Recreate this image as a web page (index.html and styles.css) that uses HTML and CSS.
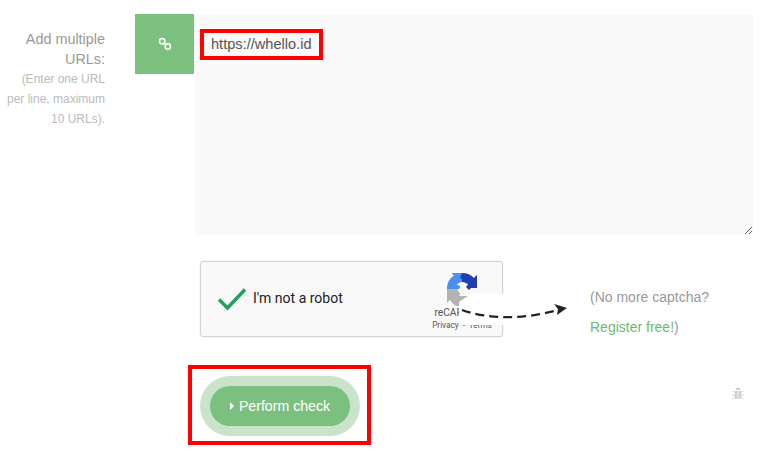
FILE: index.html
```html
<!DOCTYPE html>
<html lang="en">
<head>
<meta charset="utf-8">
<title>Add multiple URLs</title>
<link rel="stylesheet" href="styles.css">
</head>
<body>
<main class="form">
  <section class="url-row">
    <label class="label" for="urls">
      <span class="label-main">Add multiple URLs:</span>
      <span class="label-hint">(Enter one URL per line, maximum 10 URLs).</span>
    </label>
    <div class="addon">
      <svg class="link-icon" width="14" height="14" viewBox="0 0 14 14" aria-hidden="true">
        <circle cx="4.200" cy="4.200" r="2.700"/>
        <circle cx="9.800" cy="9.500" r="2.700"/>
        <path d="M5.500 5.500 8.500 8.300"/>
      </svg>
    </div>
    <div class="field">
      <textarea id="urls" class="urls" spellcheck="false">https://whello.id</textarea>
      <span class="mark mark-url"></span>
    </div>
  </section>

  <section class="captcha-row">
    <div class="captcha">
      <svg class="check" width="30" height="24" viewBox="0 0 30 24" aria-hidden="true">
        <path d="M2 12.500 10.500 21 28 2.500"/>
      </svg>
      <span class="captcha-text">I'm not a robot</span>
      <div class="brand">
        <svg class="recaptcha" width="30" height="33" viewBox="0 0 30 33" aria-hidden="true">
          <path class="rc-blue" d="M0 16C0 10 2.500 5.500 7 2.800L4.500 0H15V9C13 9 11 10.200 10 12L13.500 13 12 16Z"/>
          <path class="rc-navy" d="M15 0C20 0 24 1.800 26.800 5L30 2V15H24L22 17 19 14 21 11.500C19.800 10 17.500 9 15 9V6L13 5Z"/>
          <path class="rc-grey" d="M0 16H10.500C11 18 12 19.500 13.500 20.500L12 23H24V33H9C7 32 5 30 3 27L0 30Z"/>
        </svg>
        <span class="brand-name">reCAPTCHA</span>
        <span class="brand-links">Privacy - Terms</span>
      </div>
    </div>
    <div class="register">
      <p class="register-line">(No more captcha?</p>
      <p class="register-line"><a class="register-link" href="#">Register free!</a>)</p>
    </div>
    <div class="patch"></div>
    <svg class="arrow" width="112" height="24" viewBox="0 0 112 24" aria-hidden="true">
      <path class="arrow-line" d="M1 5C26 14 62 15 97 5"/>
      <path class="arrow-head" d="M93 -1 106 3 96 10 97 4Z"/>
    </svg>
  </section>

  <section class="action-row">
    <div class="halo">
      <button class="submit" type="button"><span class="caret"></span>Perform check</button>
    </div>
    <span class="mark mark-button"></span>
    <svg class="bug" width="14" height="14" viewBox="0 0 14 14" aria-hidden="true">
      <path class="bug-body" d="M4 5H10V11.500C10 12.500 9 13 7 13S4 12.500 4 11.500ZM4.500 4C4.500 2.500 5.500 1.500 7 1.500S9.500 2.500 9.500 4Z"/>
      <path class="bug-legs" d="M4 6.500 1.500 5M10 6.500 12.500 5M4 9H1M10 9H13M4 11 1.500 13M10 11 12.500 13"/>
      <path class="bug-line" d="M7 5V13"/>
    </svg>
  </section>
</main>
</body>
</html>
```

FILE: styles.css
```css
html, body {
  margin: 0;
  padding: 0;
  background: #fff;
}

body {
  width: 765px;
  height: 450px;
  overflow: hidden;
  font-family: "Liberation Sans", Arial, sans-serif;
}

.form {
  display: flex;
  flex-direction: column;
  padding-top: 14px;
}

.url-row {
  display: flex;
  align-items: flex-start;
}

.label {
  display: flex;
  flex-direction: column;
  box-sizing: border-box;
  width: 105px;
  margin-right: 30px;
  padding: 15px 0 0 5px;
  text-align: right;
}

.label-main {
  font-size: 14.4px;
  line-height: 20px;
  color: #999;
}

.label-hint {
  font-size: 12px;
  line-height: 20px;
  color: #bbb;
}

.addon {
  display: flex;
  align-items: center;
  justify-content: center;
  width: 59px;
  height: 60px;
  background: #7cc07f;
}

.link-icon {
  fill: none;
  stroke: #fff;
  stroke-width: 1.5;
}

.field {
  position: relative;
  width: 558px;
  height: 220px;
  margin: 1px 0 0 1px;
}

.urls {
  display: block;
  box-sizing: border-box;
  width: 100%;
  height: 100%;
  margin: 0;
  padding: 19px 16px;
  border: 0;
  outline: 0;
  resize: both;
  background: #f9f9f9;
  color: #555;
  font-family: "Liberation Sans", Arial, sans-serif;
  font-size: 14.6px;
  line-height: 20px;
}

.mark {
  position: absolute;
  box-sizing: border-box;
  border: 4px solid #f00;
}

.mark-url {
  left: 5px;
  top: 14px;
  width: 123px;
  height: 31px;
}

.captcha-row {
  position: relative;
  display: flex;
  align-items: flex-start;
  margin: 26px 0 0 200px;
}

.captcha {
  display: flex;
  align-items: center;
  box-sizing: border-box;
  width: 303px;
  height: 76px;
  padding: 0 10px 0 16px;
  background: #f9f9f9;
  border: 1px solid #d3d3d3;
  border-radius: 3px;
  box-shadow: 0 0 3px rgba(0, 0, 0, .08);
}

.check {
  flex: none;
  fill: none;
  stroke: #249e58;
  stroke-width: 3.4;
}

.captcha-text {
  margin: 0 0 2px 6px;
  font-family: Roboto, "Liberation Sans", sans-serif;
  font-size: 14px;
  color: #222;
}

.brand {
  display: flex;
  flex-direction: column;
  align-items: center;
  width: 60px;
  margin-left: auto;
  padding-top: 6px;
  font-family: Roboto, "Liberation Sans", sans-serif;
  color: #555;
  white-space: nowrap;
}

.recaptcha {
  display: block;
}

.rc-blue {
  fill: #4a90f0;
}

.rc-navy {
  fill: #1f3fae;
}

.rc-grey {
  fill: #b4b4b4;
}

.brand-name {
  margin-top: 1px;
  font-size: 10.2px;
  line-height: 12px;
}

.brand-links {
  font-size: 8.2px;
  line-height: 12px;
  word-spacing: 2px;
}

.register {
  margin: 26px 0 0 87px;
  font-size: 14px;
  color: #999;
}

.register-line {
  margin: 0 0 10px;
  line-height: 20px;
}

.register-link {
  color: #6dbb72;
  text-decoration: none;
}

.patch {
  position: absolute;
  left: 259px;
  top: 33px;
  width: 45px;
  height: 31px;
  background: #fff;
  clip-path: polygon(12px 0, 100% 0, 100% 100%, 0 100%, 0 8px);
}

.arrow {
  position: absolute;
  left: 261px;
  top: 44px;
  overflow: visible;
}

.arrow-line {
  fill: none;
  stroke: #222;
  stroke-width: 2.300;
  stroke-dasharray: 9 5;
}

.arrow-head {
  fill: #222;
}

.action-row {
  position: relative;
  display: flex;
  align-items: center;
  justify-content: space-between;
  margin: 29px 20px 0 200px;
}

.halo {
  box-sizing: border-box;
  width: 160px;
  height: 60px;
  padding: 10px;
  background: #cae4cb;
  border-radius: 30px;
}

.submit {
  display: flex;
  align-items: center;
  justify-content: center;
  width: 140px;
  height: 40px;
  padding: 0;
  border: 0;
  border-radius: 20px;
  background: #7cc07f;
  color: #fff;
  font-family: "Liberation Sans", Arial, sans-serif;
  font-size: 14.150px;
}

.caret {
  width: 0;
  height: 0;
  margin-right: 5px;
  border-left: 4px solid #fff;
  border-top: 4px solid transparent;
  border-bottom: 4px solid transparent;
}

.mark-button {
  left: -12px;
  top: -11px;
  width: 183px;
  height: 80px;
}

.bug {
  margin-bottom: 26px;
}

.bug-body {
  fill: #cfcfcf;
}

.bug-legs {
  fill: none;
  stroke: #cfcfcf;
  stroke-width: 1;
}

.bug-line {
  stroke: #fff;
  stroke-width: .8;
}
```
